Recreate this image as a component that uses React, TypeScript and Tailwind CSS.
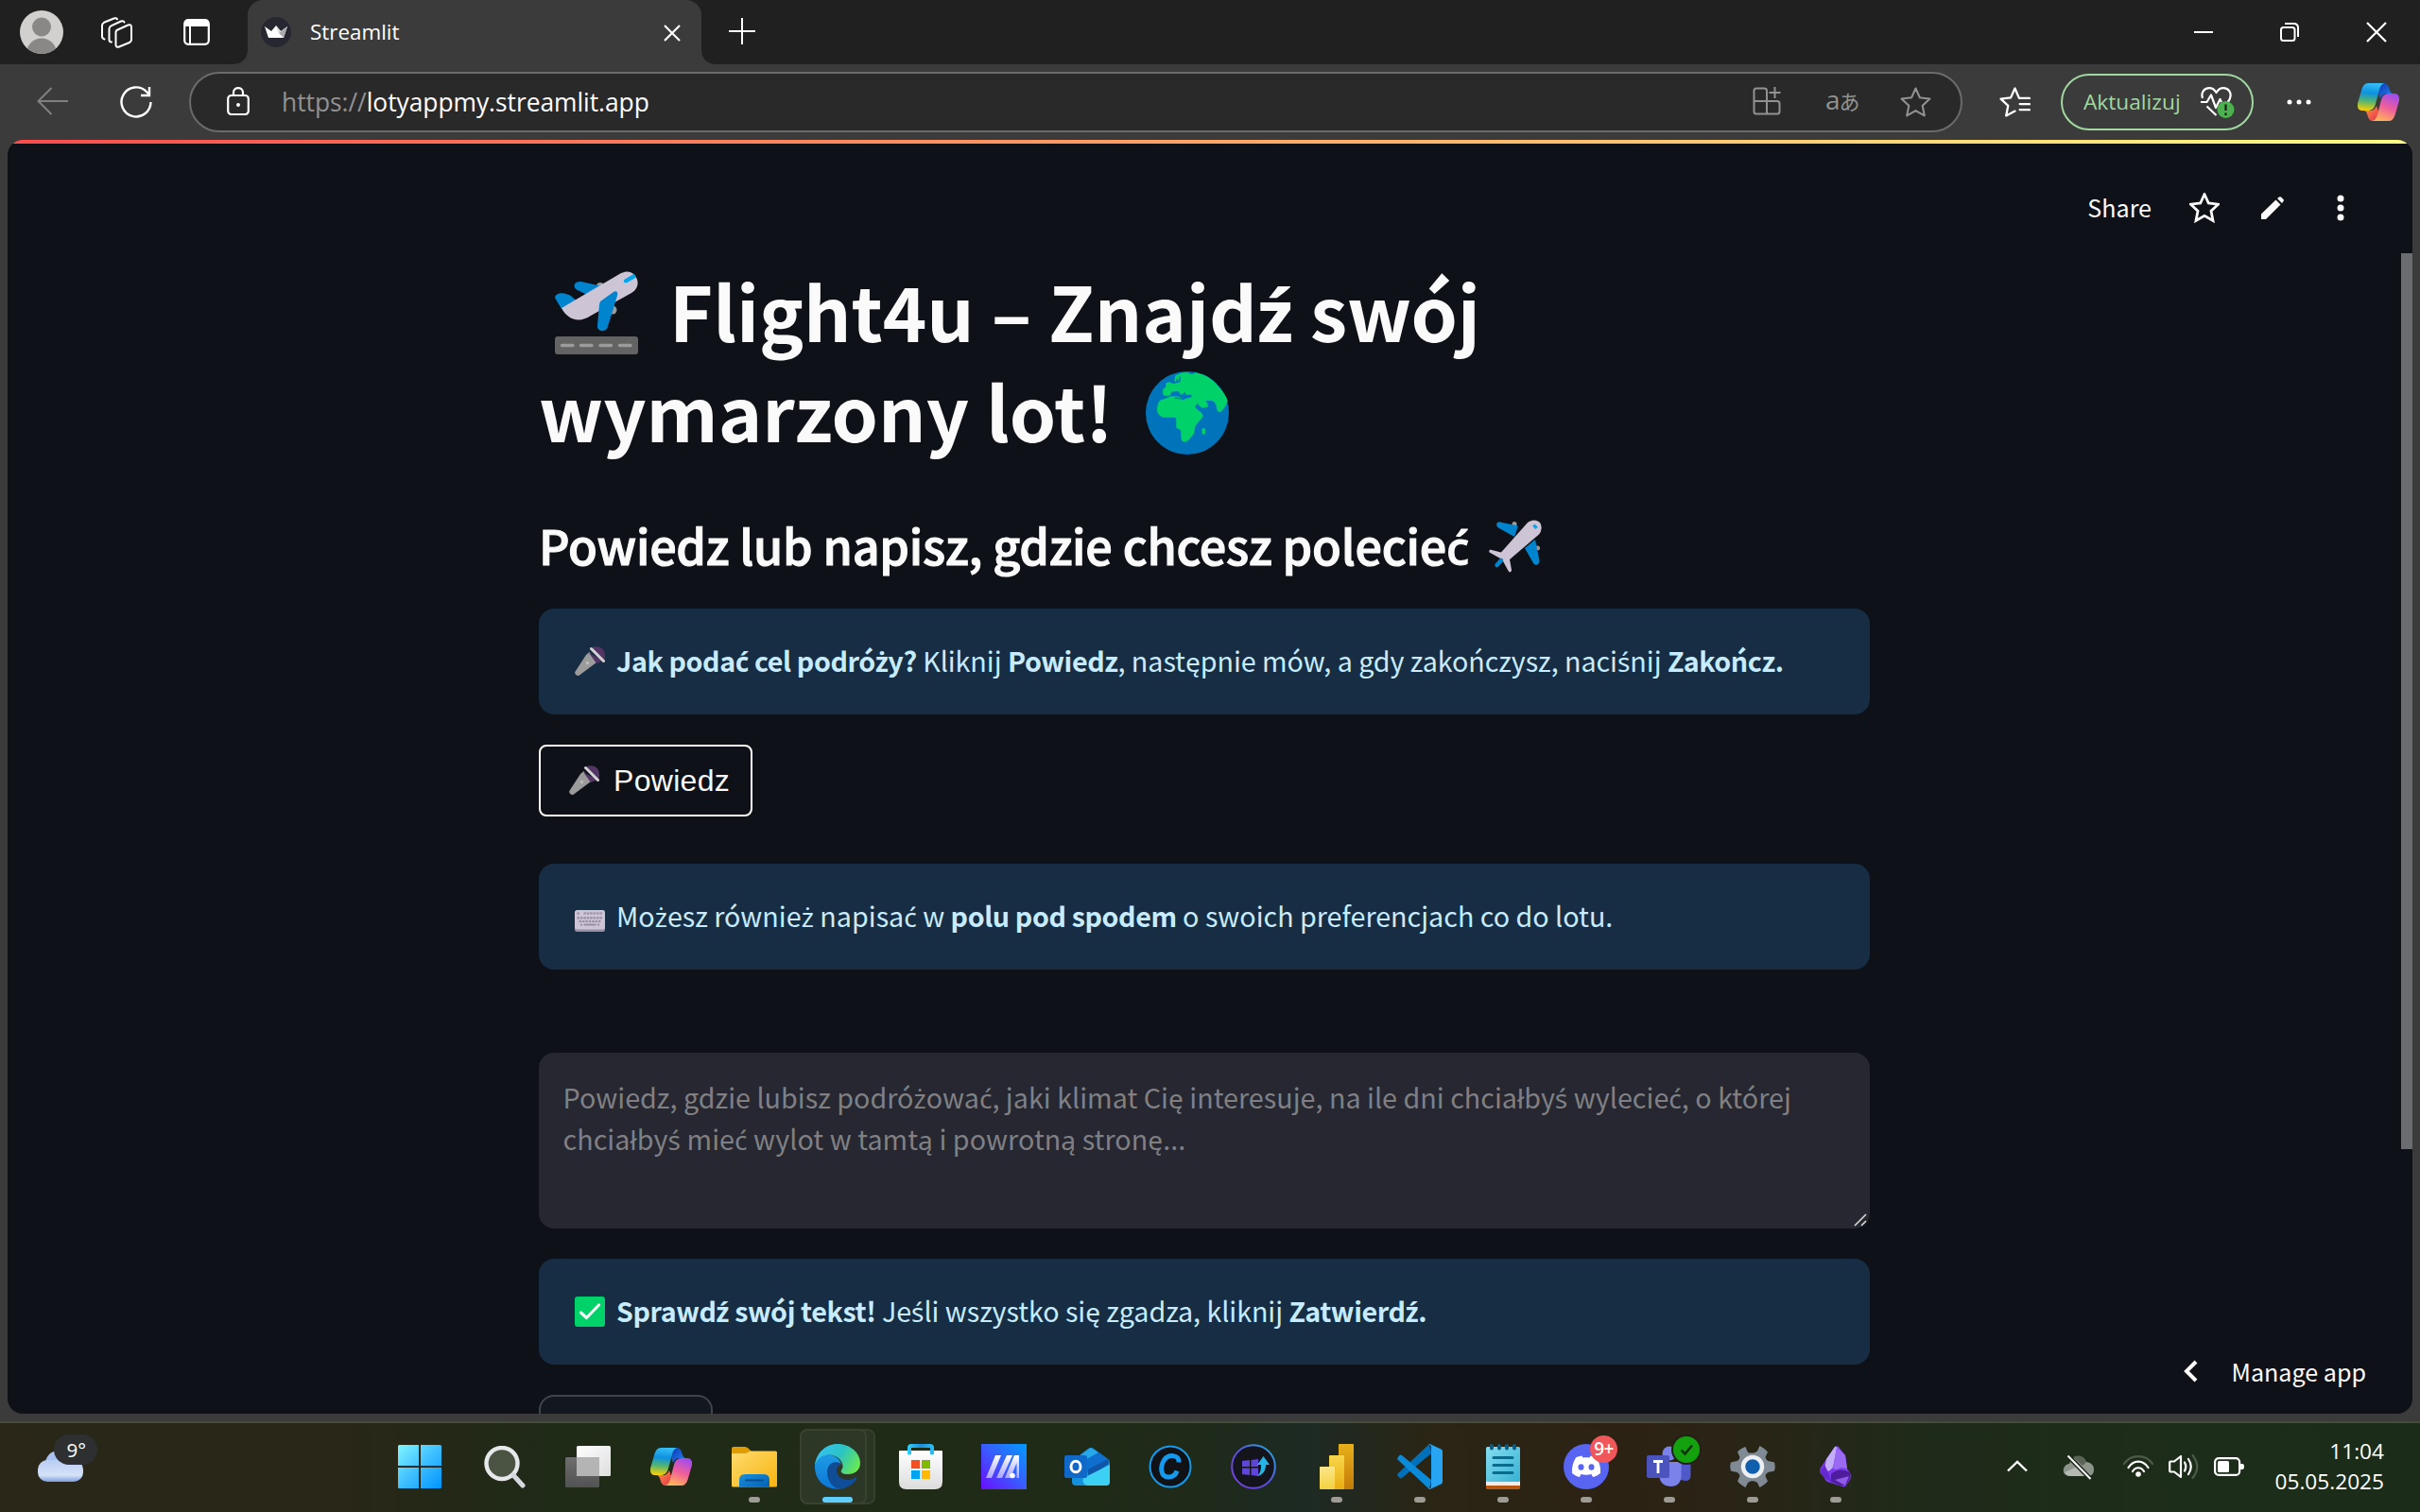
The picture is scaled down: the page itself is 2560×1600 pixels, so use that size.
import type { ReactNode } from "react";

/* Sets the Polish diacritics that the body face lacks in a matching humanist face. */
function Pl({ t }: { t: string }) {
  return (
    <>
      {t.split(/([ąęłśćźżĄĘŁŚĆŹŻ])/).map((part, i) =>
        i % 2 ? (
          <span key={i} className="font-['Noto_Sans'] text-[0.98em] leading-none">{part}</span>
        ) : (
          part
        ),
      )}
    </>
  );
}

/* ---------- emoji drawings ---------- */

const Takeoff = () => (
  <svg viewBox="0 0 88 88" className="ml-[17px] mr-[33px] inline-block size-[88px] align-[-13px]">
    <circle cx="48" cy="16" r="4" fill="#9B9B9B" />
    <circle cx="61" cy="41" r="4.5" fill="#9B9B9B" />
    <path d="M0 28C1 22 11 22 18 27L24 32L7 40Z" fill="#0084CE" />
    <path d="M28 11L50 16L36 26L24 20C18 17 20 10 28 11Z" fill="#0084CE" />
    <path d="M7 39L70 2C82 -4 90 8 87 16C86 19 84 21 81 23L38 47C26 55 14 52 7 39Z" fill="#CDC4D6" />
    <path d="M74 8.500L83.500 2.800L86 6.500L76.500 12C73.500 13.500 71.500 10 74 8.500Z" fill="#00A6ED" />
    <path d="M48 32L62 22C65 20 67 22 66 26L55.500 60C53 65 44 64 45 57L47 35Z" fill="#0084CE" />
    <rect x="0" y="69" width="88" height="19" rx="3" fill="#636363" />
    <path d="M7.500 78.500H19M27.500 78.500H39M48 78.500H59.500M68.500 78.500H80" stroke="#9B9B9B" strokeWidth="3.400" strokeLinecap="round" />
  </svg>
);

const Globe = () => (
  <svg viewBox="0 0 88 88" className="ml-[34px] inline-block size-[88px] align-[-13px]">
    <circle cx="44" cy="44" r="44" fill="#0074BA" />
    <path
      d="M19 24V19L22 17V13L25 12L29 14L36 12L38 7L34 9L31 10L32 5L39 2L44 2L49 4L53 2C62 4 70 9 75 15C81 21 84 26 86 31C85 35 81 41 79 42C76 43 76 40 75 35C73 30 70 30 64 30L63 32L65 35V37L60 38L57 36L57 34C53 33 51 35 52 39L58 44L60 47L52 57L50 66L45 72L42 74C38 74 38 71 38 68V62L33 59V49L30 48H19C14 47 12 42 13 38C13 33 16 30 20 30L27 27H33L36 28L41 30L48 28L50 26L48 24H43L42 20L38 24L34 20L27 21L25 25H20Z"
      fill="#00D26A"
      stroke="#00D26A"
      strokeWidth="1.500"
      strokeLinejoin="round"
    />
    <path d="M30.500 28.500C34 27.500 37 29 41 29.500M36 5.500V10C34 12 33 10 33 8" fill="none" stroke="#0074BA" strokeWidth="1.600" />
    <rect x="59.500" y="60" width="3.400" height="6.600" rx="1.700" fill="#00D26A" />
  </svg>
);

const Plane = () => (
  <svg viewBox="0 0 56 56" className="ml-[21px] inline-block size-[56px] align-[-8px]">
    <circle cx="27" cy="4.500" r="2.500" fill="#9B9B9B" />
    <circle cx="51.500" cy="30" r="2.500" fill="#9B9B9B" />
    <path d="M12 2.500L31 6.500L27 18L10 8.500C6.500 6 8.500 1.500 12 2.500Z" fill="#0084CE" />
    <path d="M38 30L49 21L53.500 43C54 47.500 49 49.500 47 46Z" fill="#0084CE" />
    <path d="M41 3C45 -.5 51 -.5 54 3C56.500 7 56 12 53 15.500L22 42L24 53C24 56 21.500 56 20.500 54L14 42L1.500 35C-1 33.500 .5 31 3 32L13 34.500Z" fill="#CDC4D6" />
    <path d="M8.500 48L13 43" stroke="#0084CE" strokeWidth="4.500" strokeLinecap="round" />
    <path d="M47.500 5.500L50.500 9" stroke="#00A6ED" strokeWidth="3.400" />
  </svg>
);

const Mic = ({ className }: { className: string }) => (
  <svg viewBox="0 0 32 32" className={"inline-block size-[32px] " + className}>
    <path d="M18 1.500C22 -.5 27 0 30 3.500C32.500 7 32.500 12 31 15.500Z" fill="#533566" />
    <path d="M15.500 6L23 17L5 30.500C3 32 -.5 30 .3 27L12 9Z" fill="#9B9B9B" />
    <path d="M15 7L23 18L30 15Z" fill="#533566" />
    <path d="M17.500 2.500L30.500 15.500" stroke="#D3D3D3" strokeWidth="3" strokeLinecap="round" />
    <circle cx="13.500" cy="17.500" r="1.700" fill="#BEBEBE" />
  </svg>
);

const KeyboardEmoji = () => (
  <svg viewBox="0 0 32 23" className="mr-[12px] inline-block h-[23px] w-[32px] align-[-5px]">
    <rect y="1" width="32" height="22" rx="2.500" fill="#998EA4" />
    <rect width="32" height="20.500" rx="2.500" fill="#CDC4D6" />
    <path d="M2.500 3.500h2.500M9.500 3.500h19.500" stroke="#998EA4" strokeWidth="2.200" strokeDasharray="2.500 .9" />
    <path d="M2.500 8.300h27" stroke="#998EA4" strokeWidth="2.200" strokeDasharray="2.500 .9" />
    <path d="M4.500 12h23" stroke="#998EA4" strokeWidth="2.200" strokeDasharray="2.500 .9" />
    <path d="M6 15.500h2M9.500 15.500h13M24 15.500h2" stroke="#998EA4" strokeWidth="2.200" />
  </svg>
);

const CheckEmoji = () => (
  <svg viewBox="0 0 32 32" className="mr-[12px] inline-block size-[32px] align-[-5px]">
    <rect width="32" height="32" rx="3" fill="#00D26A" />
    <path d="M6.500 17L12.500 22.500L25.500 9" fill="none" stroke="#F4F4F4" strokeWidth="3.200" strokeLinecap="round" strokeLinejoin="round" />
  </svg>
);

/* ---------- browser icons ---------- */

const STAR = "M16 1.500L20.300 11L30.500 12.200L23 19.200L25 29.500L16 24.400L7 29.500L9 19.200L1.500 12.200L11.700 11Z";

const Copilot = ({ className, id }: { className: string; id: string }) => (
  <svg viewBox="0 0 44 40" className={className}>
    <defs>
      <linearGradient id={id + "a"} x1=".4" y1="0" x2=".3" y2="1">
        <stop offset="0" stopColor="#35BDF5" /><stop offset=".35" stopColor="#0D91E1" /><stop offset=".65" stopColor="#52B471" /><stop offset="1" stopColor="#FFD000" />
      </linearGradient>
      <linearGradient id={id + "b"} x1=".7" y1="0" x2=".3" y2="1">
        <stop offset="0" stopColor="#A24BEE" /><stop offset=".5" stopColor="#F0609A" /><stop offset="1" stopColor="#FFB657" />
      </linearGradient>
      <linearGradient id={id + "c"} x1="0" y1="0" x2="1" y2="1">
        <stop offset="0" stopColor="#0A35B8" /><stop offset="1" stopColor="#2B8CF0" />
      </linearGradient>
      <linearGradient id={id + "d"} x1="0" y1="0" x2="1" y2="1">
        <stop offset="0" stopColor="#FF9B3D" /><stop offset="1" stopColor="#E5334F" />
      </linearGradient>
    </defs>
    <path d="M24 0H28C31 0 32.500 2 33.500 6C34.500 10 36 11 38 11H30C28 11 26 12 24 16L22 10Z" fill={"url(#" + id + "c)"} />
    <path d="M20 40H16C13 40 11.500 38 10.500 34C9.500 30 8 29 6 29H14C16 29 18 28 20 24L22 30Z" fill={"url(#" + id + "d)"} />
    <path d="M11 0H29C26 0 24 3 23 7L19 22C17.500 27 15 29 11 29H5C0 29 -1 24 .5 20L4.500 6C6 2 8 0 11 0Z" fill={"url(#" + id + "a)"} />
    <path d="M33 40H15C18 40 20 37 21 33L25 18C26.500 13 29 11 33 11H39C44 11 45 16 43.500 20L39.500 34C38 38 36 40 33 40Z" fill={"url(#" + id + "b)"} />
  </svg>
);

function TabStrip() {
  return (
    <div className="flex h-[68px] items-center bg-[#202020]">
      <svg viewBox="0 0 46 46" className="ml-[21px] size-[46px]">
        <defs><clipPath id="av"><circle cx="23" cy="23" r="23" /></clipPath></defs>
        <g clipPath="url(#av)">
          <rect width="46" height="46" fill="#D2D0CE" />
          <circle cx="23" cy="17.500" r="10" fill="#8A8886" />
          <ellipse cx="23" cy="46" rx="16" ry="16.500" fill="#8A8886" />
        </g>
      </svg>
      <svg viewBox="0 0 33 33" className="ml-[40px] size-[33px]" fill="none" stroke="#fff" strokeWidth="2" strokeLinejoin="round" strokeLinecap="round">
        <path d="M17.500 13.500L28.500 8.500C30.500 7.800 32 8.500 32 10.500V24C32 25.500 31.500 26.300 30 27L19 31.500C17 32.300 15.500 31.500 15.500 29.500V16.500C15.500 15 16 14 17.500 13.500Z" />
        <path d="M11 26.500C9 26.500 8.500 25.500 8.500 24V12.500C8.500 11 9 10 10.500 9.300L21 4.500C22.500 4 24 4.200 24.500 5.500" />
        <path d="M3.500 23.500C1.800 23 1 22 1 20.500V9C1 7.500 1.500 6.500 3 5.800L13.500 1.500C15 .9 16.500 1 17 2.300" />
      </svg>
      <svg viewBox="0 0 28 28" className="ml-[53.500px] size-[28px]">
        <rect x="1.200" y="1.200" width="25.600" height="25.600" rx="4" fill="none" stroke="#fff" strokeWidth="2.200" />
        <path d="M1 8V4C1 2 2.500 1 4 1H24C26 1 27 2.500 27 4V8Z" fill="#fff" />
        <path d="M7 7V27" stroke="#fff" strokeWidth="2" />
      </svg>
      <div className="relative ml-[40.500px] flex h-[68px] w-[480px] items-center rounded-t-[16px] bg-[#3b3b3b] pl-[14px] pr-[22px]">
        <svg viewBox="0 0 16 16" className="absolute -left-4 bottom-0 size-4"><path d="M16 0V16H0C10 16 16 10 16 0Z" fill="#3b3b3b" /></svg>
        <svg viewBox="0 0 16 16" className="absolute -right-4 bottom-0 size-4"><path d="M0 0V16H16C6 16 0 10 0 0Z" fill="#3b3b3b" /></svg>
        <svg viewBox="0 0 32 32" className="size-[32px]">
          <circle cx="16" cy="16" r="16" fill="#262730" />
          <path d="M4 10L11 15L16 9L21 15L28 10L24 22H8Z" fill="#fff" />
          <path d="M28 10L24 22L19 17Z" fill="#A9A9AE" />
          <path d="M16 9L21 15L19 18Z" fill="#D8D8DA" />
        </svg>
        <span className="ml-[20px] text-[22.400px] leading-8 text-white">Streamlit</span>
        <svg viewBox="0 0 18 18" className="ml-auto mt-[2px] size-[18px]"><path d="M1 1L17 17M17 1L1 17" stroke="#fff" strokeWidth="2.200" /></svg>
      </div>
      <svg viewBox="0 0 28 28" className="ml-[29px] mt-[-2px] size-[28px]"><path d="M14 0V28M0 14H28" stroke="#fff" strokeWidth="2" /></svg>
      <svg viewBox="0 0 20 20" className="ml-auto size-[20px]"><path d="M0 10H20" stroke="#fff" strokeWidth="2" /></svg>
      <svg viewBox="0 0 20 20" className="ml-[71px] size-[20px]" fill="none" stroke="#fff" strokeWidth="2">
        <rect x="1" y="5" width="14.500" height="14" rx="2.500" />
        <path d="M5 1H14.500C17.500 1 19 3 19 5.500V15" />
      </svg>
      <svg viewBox="0 0 22 22" className="ml-[71px] mr-[35px] size-[22px]"><path d="M1 1L21 21M21 1L1 21" stroke="#fff" strokeWidth="2.200" /></svg>
    </div>
  );
}

function Toolbar() {
  return (
    <div className="flex h-[80px] items-center bg-[#3b3b3b]">
      <svg viewBox="0 0 34 30" className="ml-[39px] mt-[-2px] h-[30px] w-[34px]" fill="none" stroke="#808080" strokeWidth="2"><path d="M33 15H2M15.500 1L1.500 15L15.500 29" /></svg>
      <svg viewBox="0 0 34 34" className="ml-[54px] size-[34px]" fill="none" stroke="#fff" strokeWidth="2.400">
        <path d="M32.500 17A15.500 15.500 0 1 1 28 6L31 9.500" />
        <path d="M31 1V10H22" />
      </svg>
      <div className="ml-[39px] flex h-[64px] w-[1876px] items-center rounded-full border-2 border-[#6b6b6b] bg-[#292929]">
        <svg viewBox="0 0 24 30" className="ml-[38px] mt-[-2px] h-[30px] w-[24px]" fill="none" stroke="#fff" strokeWidth="2.200">
          <rect x="1.200" y="9" width="21.600" height="20" rx="3.500" />
          <path d="M7 9V6C7 -.5 17 -.5 17 6V9" />
          <circle cx="12" cy="19" r="2" fill="#fff" stroke="none" />
        </svg>
        <span className="ml-[34px] text-[26.400px] leading-9 tracking-[-0.040px] text-white"><span className="text-[#929292]">https://</span>lotyappmy.streamlit.app</span>
        <svg viewBox="0 0 30 30" className="ml-auto mt-[-2px] size-[30px]" fill="none" stroke="#929292" strokeWidth="2">
          <path d="M15 15V4C15 2.500 14 1.500 12.500 1.500H4C2.500 1.500 1.500 2.500 1.500 4V26C1.500 27.500 2.500 28.500 4 28.500H26C27.500 28.500 28.500 27.500 28.500 26V17.500C28.500 16 27.500 15 26 15H1.500M15 15V28.500M23.500 0V12M17.500 6H29.500" />
        </svg>
        <span className="ml-[47px] mt-[-5px] flex w-[36px] items-baseline text-[#929292]">
          <span className="text-[28px] leading-8 tracking-[-1px]">a</span>
          <span className="font-['Noto_Sans_CJK_JP'] text-[22px] leading-8">あ</span>
        </span>
        <svg viewBox="0 0 32 32" className="ml-[43px] mr-[31px] size-[33px]" fill="none" stroke="#929292" strokeWidth="2" strokeLinejoin="round"><path d={STAR} /></svg>
      </div>
      <svg viewBox="0 0 32 32" className="ml-[39px] size-[33px]" fill="none" stroke="#fff" strokeWidth="2.200" strokeLinejoin="round" strokeLinecap="round">
        <path d="M31 11.500H20.300L16 1.500L11.700 11L1.500 12.200L9 19.200L7 29.500L16 24.800" />
        <path d="M21 17.500H31M21 23.500H31" />
      </svg>
      <div className="ml-[32px] flex h-[60px] w-[204px] items-center rounded-full border-2 border-[#a0d8a0] pl-[22px]">
        <span className="mt-[-1px] w-[103px] whitespace-nowrap text-[22.700px] leading-8 text-[#a0d8a0]">Aktualizuj</span>
        <svg viewBox="0 0 36 34" className="ml-[21px] mt-[1px] h-[34px] w-[36px]" fill="none" stroke="#fff" strokeWidth="2.200" strokeLinejoin="round">
          <path d="M2 12C0 6 3.500 1.200 9 1.200C12.500 1.200 15 3.500 16.500 6C18 3.500 20.500 1.200 24 1.200C29.500 1.200 33 6 31 12C30.500 14 29.500 15 28.500 16" />
          <path d="M0 16H6.500L11 8.500L16 22L20.500 13L22 16M6.500 20.500L16.500 30" />
          <circle cx="26.500" cy="24" r="9" fill="#4CAF50" stroke="none" />
          <path d="M26.500 18.500V25M26.500 27.500V30" stroke="#1c1c1c" />
        </svg>
      </div>
      <svg viewBox="0 0 26 6" className="ml-[35px] h-[6px] w-[26px]" fill="#fff"><circle cx="3" cy="3" r="2.500" /><circle cx="13" cy="3" r="2.500" /><circle cx="23" cy="3" r="2.500" /></svg>
      <Copilot id="cpa" className="ml-[49px] h-[40px] w-[44px]" />
    </div>
  );
}

/* ---------- Streamlit page ---------- */

const Info = ({ children, className }: { children: ReactNode; className: string }) => (
  <div className={"flex h-[112px] shrink-0 items-center rounded-[16px] bg-[#172d43] pb-[3px] pl-[38px] text-[28.700px] leading-[44px] text-[#c7ebff] " + className}>
    <p className="whitespace-nowrap">{children}</p>
  </div>
);

const B = ({ t }: { t: string }) => (
  <b className="tracking-[-0.400px]"><Pl t={t} /></b>
);

function Page() {
  return (
    <div className="mx-[8px] h-[1348px] overflow-hidden rounded-[16px] bg-[#0e1117]">
      <div className="h-[4px] bg-[linear-gradient(90deg,#ff4b4b,#fffd80)]" />
      <div className="relative flex h-[1344px] flex-col font-['Noto_Sans_CJK_SC','Noto_Sans',sans-serif] text-[#fafafa]">
        <div className="flex h-[123px] shrink-0 items-center justify-end pr-[72px] pt-[13px]">
          <span className="mt-[-3px] text-[25.100px] leading-8">Share</span>
          <svg viewBox="0 0 32 32" className="ml-[40px] size-[32px]" fill="none" stroke="#fafafa" strokeWidth="2.800" strokeLinejoin="miter"><path d={STAR} /></svg>
          <svg viewBox="0 0 26 24" className="ml-[44px] h-[24px] w-[26px]" fill="#fafafa">
            <path d="M0 24V18.500L15.500 3.500L20.500 8.500L5 24Z" /><path d="M17 2L19 .5C19.500 0 20.300 0 21 .5L23.500 3C24 3.500 24 4.300 23.500 5L22 7Z" />
          </svg>
          <svg viewBox="0 0 8 28" className="ml-[54px] h-[28px] w-[8px]" fill="#fafafa"><circle cx="4" cy="4" r="3.500" /><circle cx="4" cy="14" r="3.500" /><circle cx="4" cy="24" r="3.500" /></svg>
        </div>

        <main className="ml-[562px] flex w-[1408px] flex-col">
          <h1 className="h-[212px] whitespace-nowrap text-[79px] font-bold leading-[106px]">
            <Takeoff /><span className="tracking-[-0.050px]"><Pl t="Flight4u – Znajdź swój" /></span>
            <br />
            <Pl t="wymarzony lot!" /><Globe />
          </h1>
          <h2 className="mt-[55px] h-[68px] whitespace-nowrap text-[50.300px] font-medium leading-[68px]">
            <span className="tracking-[-0.240px] [-webkit-text-stroke:1.100px_#fafafa]"><Pl t="Powiedz lub napisz, gdzie chcesz polecieć" /></span><Plane />
          </h2>

          <Info className="mt-[34px]">
            <Mic className="mr-[12px] align-[-5px]" />
            <B t="Jak podać cel podróży?" />
            <span className="tracking-[-0.050px]"> Kliknij <B t="Powiedz" />, <Pl t="następnie mów, a gdy zakończysz, naciśnij " /></span>
            <B t="Zakończ." />
          </Info>

          <button className="mt-[32px] flex h-[76px] w-[226px] items-center rounded-[8px] border-2 border-white pl-[30px] font-['Liberation_Sans'] text-[32px] tracking-[0.300px] text-[#fafafa]">
            <Mic className="mr-[15px]" />
            Powiedz
          </button>

          <Info className="mt-[50px]">
            <KeyboardEmoji />
            <Pl t="Możesz również napisać w " /><B t="polu pod spodem" /><Pl t=" o swoich preferencjach co do lotu." />
          </Info>

          <div className="relative mt-[88px] h-[186px] rounded-[16px] bg-[#262730] pl-[25.500px] pt-[25px] text-[28.700px] leading-[44px] text-[#808084]">
            <p className="whitespace-nowrap tracking-[0.020px]">
              <Pl t="Powiedz, gdzie lubisz podróżować, jaki klimat Cię interesuje, na ile dni chciałbyś wylecieć, o której" />
              <br />
              <span className="tracking-[0.060px]"><Pl t="chciałbyś mieć wylot w tamtą i powrotną stronę..." /></span>
            </p>
            <svg viewBox="0 0 14 14" className="absolute bottom-[2px] right-[3px] size-[14px]" stroke="#d8d8d8" strokeWidth="1.600"><path d="M1 13L13 1M8 13L13 8" /></svg>
          </div>

          <Info className="mt-[32px]">
            <CheckEmoji />
            <B t="Sprawdź swój tekst!" /> <span className="tracking-[-0.050px]"><Pl t="Jeśli wszystko się zgadza, kliknij " /></span><B t="Zatwierdź." />
          </Info>

          <div className="mt-[32px] h-[76px] w-[184px] rounded-[16px] border-2 border-[#41444c] bg-[#131720]" />
        </main>

        <div className="absolute right-0 top-[116px] h-[948px] w-[12px] bg-[#6b6c6f]" />
        <div className="absolute bottom-[23px] right-[49px] flex items-center">
          <svg viewBox="0 0 16 24" className="mr-[36px] h-[24px] w-[16px]" fill="none" stroke="#fff" strokeWidth="4"><path d="M14 2L4 12L14 22" /></svg>
          <span className="text-[25.100px] leading-[44px]">Manage app</span>
        </div>
      </div>
    </div>
  );
}

/* ---------- taskbar ---------- */

const Slot = ({ children, dot }: { children: ReactNode; dot?: boolean }) => (
  <div className="relative flex h-[94px] w-[88px] items-center justify-center pb-[2px]">
    {children}
    {dot && <div className="absolute bottom-[10px] h-[6px] w-[12px] rounded-full bg-[#9d9b93]" />}
  </div>
);

const ic = "size-[48px] overflow-visible";

function Taskbar() {
  return (
    <div className="flex h-[96px] items-stretch border-t-2 border-[#454a3d] bg-[linear-gradient(90deg,#2a2718_0%,#292717_14%,#1f2a17_23%,#1f2a18_49%,#1d2a24_54%,#2a2515_59%,#2c2214_67%,#282516_73%,#1f2a19_79%,#1c2d19_90%,#1b2d18_100%)]">
      <div className="w-[402px] pl-[40px] pt-[12px]">
        <svg viewBox="0 0 66 50" className="h-[50px] w-[66px] overflow-visible">
          <defs>
            <linearGradient id="cl" x1="0" y1="0" x2="0" y2="1"><stop offset="0" stopColor="#B9CDF2" /><stop offset=".7" stopColor="#D5E2F8" /><stop offset="1" stopColor="#7F9FE0" /></linearGradient>
          </defs>
          <circle cx="22" cy="31" r="14" fill="#A9C1F0" />
          <rect x="0" y="27" width="48" height="23" rx="10" fill="url(#cl)" />
          <rect x="17" y="0" width="46" height="32" rx="16" fill="#2e2f31" />
          <text x="30.500" y="23.500" fontSize="20.500" fill="#fff" fontFamily="Open Sans">9°</text>
        </svg>
      </div>

      <Slot>
        <svg viewBox="0 0 46 46" className="mr-[4px] size-[46px]">
          <defs><linearGradient id="wn" gradientUnits="userSpaceOnUse" x1="0" y1="0" x2="46" y2="46"><stop offset="0" stopColor="#80F5FF" /><stop offset=".5" stopColor="#40C0FF" /><stop offset="1" stopColor="#0094FF" /></linearGradient></defs>
          <path d="M1.500 0H22V22H0V1.500Q0 0 1.500 0ZM24 0H44.500Q46 0 46 1.500V22H24ZM0 24H22V46H1.500Q0 46 0 44.500ZM24 24H46V44.500Q46 46 44.500 46H24Z" fill="url(#wn)" />
        </svg>
      </Slot>
      <Slot>
        <svg viewBox="0 0 44 45" className="h-[45px] w-[44px]">
          <circle cx="19" cy="18.500" r="16.500" fill="#4b5443" stroke="#E6E8EA" strokeWidth="4.400" />
          <path d="M31 31L41 42" stroke="#D5D9DD" strokeWidth="5" strokeLinecap="round" />
        </svg>
      </Slot>
      <Slot>
        <svg viewBox="0 0 48 44" className="h-[44px] w-[48px]">
          <defs>
            <linearGradient id="tv" x1="0" y1="0" x2="1" y2="1"><stop offset="0" stopColor="#fff" /><stop offset="1" stopColor="#DEDEDE" /></linearGradient>
            <linearGradient id="tw" x1="0" y1="0" x2="0" y2="1"><stop offset="0" stopColor="#6e6e6e" /><stop offset="1" stopColor="#525252" /></linearGradient>
          </defs>
          <rect x="0" y="12" width="36" height="32" rx="1.500" fill="url(#tw)" />
          <rect x="12" y="0" width="36" height="32" rx="1.500" fill="url(#tv)" />
          <rect x="12" y="12" width="24" height="20" fill="#B4B4B4" />
        </svg>
      </Slot>
      <Slot><Copilot id="cpb" className="h-[40px] w-[44px]" /></Slot>
      <Slot dot>
        <svg viewBox="0 0 48 44" className="h-[44px] w-[48px]">
          <defs>
            <linearGradient id="fo" x1="0" y1="0" x2="1" y2="1"><stop offset="0" stopColor="#FFDB6E" /><stop offset="1" stopColor="#F7B40E" /></linearGradient>
            <linearGradient id="fb" x1="0" y1="0" x2="1" y2="1"><stop offset="0" stopColor="#1A90DC" /><stop offset="1" stopColor="#0560B2" /></linearGradient>
          </defs>
          <path d="M0 3Q0 1 2 1H14Q16 1 18 3L21 6V12H0Z" fill="#DE9C05" />
          <path d="M0 8H15L20 5.500H46.500Q48 5.500 48 7V42Q48 43.500 46.500 43.500H1.500Q0 43.500 0 42Z" fill="url(#fo)" />
          <path d="M8 43.500V36Q8 30 14 30H34Q40 30 40 36V43.500Z" fill="url(#fb)" />
          <path d="M15 36.500H33" stroke="#064F91" strokeWidth="2" strokeLinecap="round" />
        </svg>
      </Slot>
      <Slot>
        <div className="absolute left-[44px] top-[6px] h-[80px] w-[40px] rounded-[8px] border-2 border-[#353f2e] bg-[#2a3423]" />
        <div className="absolute left-[4px] top-[6px] h-[80px] w-[71px] rounded-[8px] border-2 border-[#39422f] bg-[#2d3726]" />
        <svg viewBox="0 0 48 48" className="relative size-[48px]">
          <defs>
            <linearGradient id="e1" x1="0" y1=".3" x2="1" y2=".7"><stop offset="0" stopColor="#35C1F1" /><stop offset=".5" stopColor="#2BC3C4" /><stop offset="1" stopColor="#6BEA4C" /></linearGradient>
            <linearGradient id="e2" x1=".3" y1="0" x2=".3" y2="1"><stop offset="0" stopColor="#1E9BE3" /><stop offset="1" stopColor="#0B76D8" /></linearGradient>
            <linearGradient id="e3" x1="0" y1="0" x2="1" y2=".6"><stop offset="0" stopColor="#0F4C92" /><stop offset="1" stopColor="#104E9C" /></linearGradient>
          </defs>
          <path d="M0 24C0 14 8 11.500 14 11.500C22 11.500 27 17 28 22C24 17 18 20 17 27C16 37 24 43 32 46.500C16 51 0 42 0 24Z" fill="url(#e2)" />
          <path d="M0 23C1 10 11 0 24 0C38 0 48 10 48 20C48 28 42 32 35 32C29 32 27 30 28 27.500C31 25 29.500 19 25 15C17 8.500 3 11 0 23Z" fill="url(#e1)" />
          <path d="M28 22C22 16 13 20 13 30C13 40 20 48 28 47.600C36 46 42 41 44 37C45 35 43 35 42 36C33 41 24 36 23 29C22.500 25 25 22 28 22Z" fill="url(#e3)" />
        </svg>
        <div className="absolute bottom-[10px] left-[28px] h-[6px] w-[32px] rounded-full bg-[#60cdff]" />
      </Slot>
      <Slot>
        <svg viewBox="0 0 46 48" className="h-[48px] w-[46px]">
          <defs>
            <linearGradient id="st" x1="0" y1="0" x2="0" y2="1"><stop offset="0" stopColor="#fff" /><stop offset="1" stopColor="#DCDCDC" /></linearGradient>
            <linearGradient id="sh" gradientUnits="userSpaceOnUse" x1="9" y1="0" x2="37" y2="0"><stop offset="0" stopColor="#2FD3FA" /><stop offset=".5" stopColor="#1B8FE0" /><stop offset="1" stopColor="#2BC2F5" /></linearGradient>
          </defs>
          <path d="M1 7H45Q46 7 46 8V40Q46 48 38 48H8Q0 48 0 40V8Q0 7 1 7Z" fill="url(#st)" />
          <path d="M11 11V4Q11 2 13 2H33Q35 2 35 4V11" fill="none" stroke="url(#sh)" strokeWidth="4" />
          <path d="M13 17H22V26H13Z" fill="#F25022" /><path d="M24 17H33V26H24Z" fill="#7FBA00" />
          <path d="M13 28H22V37H13Z" fill="#00A4EF" /><path d="M24 28H33V37H24Z" fill="#FFB900" />
        </svg>
      </Slot>
      <Slot>
        <svg viewBox="0 0 48 48" className={ic}>
          <defs>
            <linearGradient id="as" x1="1" y1="0" x2="0" y2="1"><stop offset="0" stopColor="#009BFF" /><stop offset=".5" stopColor="#3a5cff" /><stop offset="1" stopColor="#6A0DFF" /></linearGradient>
            <linearGradient id="at" x1="0" y1="0" x2="0" y2="1"><stop offset="0" stopColor="#fff" /><stop offset="1" stopColor="#A9A4FF" /></linearGradient>
          </defs>
          <rect width="48" height="48" fill="url(#as)" />
          <path d="M15 12H21L11 36H5ZM27 12H33L22 36H16Z" fill="url(#at)" />
          <path d="M35 12H40V36H37.500V20L31 36H25Z" fill="url(#at)" />
          <circle cx="33" cy="33.500" r="2.800" fill="#fff" />
        </svg>
      </Slot>
      <Slot>
        <svg viewBox="0 0 48 40" className="h-[40px] w-[48px]">
          <path d="M8 14L25 1Q28 -1 31 1L46 12Q48 13 48 16V36Q48 40 44 40H12Q8 40 8 36Z" fill="#1490DF" />
          <path d="M10 14L28 0L38 7L22 20Z" fill="#28A8EA" />
          <path d="M20 14L36 5L46 12Q48 14 46 16L26 30Z" fill="#0F6FCE" />
          <path d="M25 23L46 12L47 17L25 32Z" fill="#1056A8" />
          <path d="M48 18V36Q48 40 44 40H24Q18 38 20 32Z" fill="#3DD0F5" />
          <rect x="0" y="8" width="24" height="24" rx="2" fill="#1068C8" />
          <ellipse cx="12" cy="20" rx="5" ry="5.800" fill="none" stroke="#fff" strokeWidth="3" />
        </svg>
      </Slot>
      <Slot>
        <svg viewBox="0 0 48 48" className={ic}>
          <circle cx="24" cy="24" r="21.500" fill="#101216" stroke="#149BF0" strokeWidth="2" />
          <path d="M33 19.500C34 11 22 10.500 17.500 17C13 24 13.500 35 22 35C27 35 30 32 31 28.500" fill="none" stroke="#149BF0" strokeWidth="5" />
        </svg>
      </Slot>
      <Slot>
        <svg viewBox="0 0 48 48" className={ic}>
          <defs><linearGradient id="nx" x1="0" y1="1" x2="1" y2="0"><stop offset="0" stopColor="#7A3BE8" /><stop offset=".5" stopColor="#5B52D8" /><stop offset="1" stopColor="#1CB4E8" /></linearGradient></defs>
          <circle cx="24" cy="24" r="22.800" fill="#14151c" stroke="url(#nx)" strokeWidth="2" />
          <path d="M12 18L20 17V24H12ZM21.500 17L29 16V24H21.500ZM12 25.500H20V33L12 32ZM21.500 25.500H29V34L21.500 33Z" fill="#5F45D8" />
          <path d="M28 34C32 30 32 26 32 22H28L34.500 13L41 22H37C37 28 34 33 28 34Z" fill="#25B4E4" />
        </svg>
      </Slot>
      <Slot dot>
        <svg viewBox="0 0 48 48" className={ic}>
          <defs>
            <linearGradient id="p1" x1="0" y1="0" x2="0" y2="1"><stop offset="0" stopColor="#E8B01A" /><stop offset="1" stopColor="#C17B07" /></linearGradient>
            <linearGradient id="p2" x1="0" y1="0" x2="0" y2="1"><stop offset="0" stopColor="#F7D64B" /><stop offset="1" stopColor="#E9AE12" /></linearGradient>
            <linearGradient id="p3" x1="0" y1="0" x2="0" y2="1"><stop offset="0" stopColor="#FAE68A" /><stop offset="1" stopColor="#F3D13F" /></linearGradient>
          </defs>
          <rect x="26" y="0" width="16" height="48" rx="1" fill="url(#p1)" />
          <rect x="16" y="12" width="16" height="36" rx="1" fill="url(#p2)" />
          <rect x="6" y="24" width="16" height="24" rx="1" fill="url(#p3)" />
        </svg>
      </Slot>
      <Slot dot>
        <svg viewBox="0 0 48 48" className={ic}>
          <path d="M34 0L36 10L5 36Q3.500 37 2 35.500L.5 33.500Q-.5 32 1 31L33 1Z" fill="#0070B8" />
          <path d="M34 48L36 38L5 12Q3.500 11 2 12.500L.5 14.500Q-.5 16 1 17L33 47Z" fill="#0A8AD8" />
          <path d="M34.500 0L46.500 5.500Q48 6.200 48 8V40Q48 41.800 46.500 42.500L34.500 48L33 47.500Q36 47.500 36 44V4Q36 .5 33 .5Z" fill="#27A5F2" />
        </svg>
      </Slot>
      <Slot dot>
        <svg viewBox="0 0 48 48" className={ic}>
          <defs><linearGradient id="np" x1="0" y1="0" x2="1" y2="1"><stop offset="0" stopColor="#86DDF0" /><stop offset="1" stopColor="#36B2D4" /></linearGradient></defs>
          <rect x="6" y="42" width="36" height="6" rx="1.500" fill="#B9560F" />
          <rect x="6" y="38" width="36" height="6" fill="#EDEDED" />
          <rect x="6" y="3" width="36" height="37" rx="1.500" fill="url(#np)" />
          <path d="M14 14.500H34M14 22.500H34M14 30.500H34" stroke="#0A6A90" strokeWidth="3" strokeLinecap="round" />
          <path d="M12 2V4.500M20 2V4.500M28 2V4.500M36 2V4.500" stroke="#0A5C80" strokeWidth="4" strokeLinecap="round" />
        </svg>
      </Slot>
      <Slot dot>
        <svg viewBox="0 0 48 48" className={ic}>
          <circle cx="24" cy="24" r="24" fill="#5865F2" />
          <path d="M19.500 12.500C16 13 13.500 14 13 14.500C10 19 8.500 25 9 31C12 33.500 14.500 34.500 17 35L18.500 32C22 33 26 33 29.500 32L31 35C33.500 34.500 36 33.500 39 31C39.500 25 38 19 35 14.500C34.500 14 32 13 28.500 12.500L27.500 14.500C25 14 23 14 20.500 14.500Z" fill="#fff" />
          <ellipse cx="18.500" cy="24.500" rx="3" ry="3.300" fill="#5865F2" /><ellipse cx="29.500" cy="24.500" rx="3" ry="3.300" fill="#5865F2" />
        </svg>
        <div className="absolute left-[48px] top-[13px] flex size-[29px] items-center justify-center rounded-full bg-[#f0575a] pb-[1px] text-[19px] font-semibold leading-none tracking-[-0.500px] text-white">9+</div>
      </Slot>
      <Slot dot>
        <svg viewBox="0 0 48 48" className={ic}>
          <circle cx="24" cy="10" r="7.500" fill="#7B83EB" />
          <path d="M34 20H44.500Q46.500 20 46.500 22V33Q46.500 39 41 39Q36 39 34 36Z" fill="#5059C9" />
          <path d="M13 19H34.500Q36.500 19 36.500 21V33Q36.500 45 25 45Q15 45 13 34Z" fill="#7B83EB" />
          <rect x="0" y="12" width="24" height="24" rx="2" fill="#4B53BC" />
          <path d="M7 18.500H17M12 18.500V31" stroke="#fff" strokeWidth="2.800" />
        </svg>
        <svg viewBox="0 0 32 32" className="absolute left-[46px] top-[12px] size-[32px]">
          <circle cx="16" cy="16" r="15" fill="#13A10E" stroke="#242018" strokeWidth="2" />
          <path d="M10.500 16.500L14.500 20.500L22 11.500" fill="none" stroke="#14330f" strokeWidth="2.600" />
        </svg>
      </Slot>
      <Slot dot>
        <svg viewBox="0 0 48 48" className={ic}>
          <path d="M19 9L16.500 3C13 4 10 6 8 8.500L10.500 14C10 17 7.500 18.500 5 18.500L1 19.500C0 22.500 0 25.500 1 28.500L5 29.500C8 29.500 10 31 10.500 34L8 39.500C10 42 13 44 16.500 46L19 41C22 38.500 26 38.500 29 41L31.500 46C35 44 38 42 40 39.500L37.500 34C38 31 40 29.500 43 29.500L47 28.500C48 25.500 48 22.500 47 19.500L43 18.500C40.500 18.500 38 17 37.500 14L40 8.500C38 6 35 4 31.500 2L29 7.500C26 10 22 10 19 9Z" fill="#7F8A94" />
          <circle cx="24" cy="24" r="10" fill="#0F5FAE" stroke="#EDEFF1" strokeWidth="4.500" />
        </svg>
      </Slot>
      <Slot dot>
        <svg viewBox="0 0 34 44" className="h-[44px] w-[34px]">
          <path d="M7 14L16 1Q18 -.5 20 1L27 10L29 24L33 30Q34 33 32 36L28 42Q27 44 24 43L8 38Q6 37 5 34L0 28Q0 25 1 23L5 17Z" fill="#7C3AED" />
          <path d="M7 14L16 1Q18 0 18 2L15 18Q14 26 8 27L5 24Z" fill="#C4AEF8" />
          <path d="M18 1L27 10L29 24Q22 22 18 25L14 24Z" fill="#9A6BF2" />
          <path d="M5 20L9 28L12 38L5 34L0 28Z" fill="#6429CF" />
          <path d="M12 30Q20 22 32 28L33 32L28 42L22 42L12 38Z" fill="#4E1D9E" />
          <path d="M16 36L31 32L27 42Z" fill="#8F5CE8" />
        </svg>
      </Slot>

      <div className="ml-auto flex items-center pb-[2px] pr-[38px]">
        <svg viewBox="0 0 22 12" className="mt-[-2px] h-[12px] w-[22px]" fill="none" stroke="#fff" strokeWidth="2.300"><path d="M1 11.500L11 1.800L21 11.500" /></svg>
        <svg viewBox="0 0 34 27" className="ml-[37px] h-[27px] w-[34px]">
          <path d="M8 23C2 23 0 19 1 15C2 12 4 10.500 7 10C10 1 22 0 25 8C31 9 33 12 33 16C33 21 30 23 27 23Z" fill="#8d958b" />
          <path d="M11 3C17 0 23 2 25 8L21 12Z" fill="#5a6355" />
          <path d="M2 19L18 12L30 22L27 23H8C5 23 3 21 2 19Z" fill="#b4bab2" />
          <path d="M5.500 1.500L29.500 26" stroke="#1c2a19" strokeWidth="5" /><path d="M5.500 1.500L29.500 26" stroke="#fff" strokeWidth="2" />
        </svg>
        <svg viewBox="0 0 32 23" className="ml-[30px] mt-[-2px] h-[23px] w-[32px]" fill="none" strokeWidth="2.200" strokeLinecap="round">
          <path d="M1 9C8 -1.500 24 -1.500 31 9" stroke="#4d5a49" />
          <path d="M5.500 13C11 4.500 21 4.500 26.500 13" stroke="#fff" /><path d="M10 17C13 12 19 12 22 17" stroke="#fff" />
          <circle cx="16" cy="20" r="2.800" fill="#fff" />
        </svg>
        <svg viewBox="0 0 32 28" className="ml-[16px] h-[28px] w-[32px]" fill="none" stroke="#fff" strokeWidth="2.200" strokeLinejoin="round" strokeLinecap="round">
          <path d="M1.200 9.500Q1.200 8.500 2.200 8.500H6L13 3V25L6 19.500H2.200Q1.200 19.500 1.200 18.500Z" />
          <path d="M17 9.500Q19.500 14 17 18.500M21 6Q26.500 14 21 22" /><path d="M25.500 2Q35 14 25.500 26" stroke="#4d5a49" />
        </svg>
        <svg viewBox="0 0 32 20" className="ml-[16px] h-[20px] w-[32px]">
          <rect x="1.100" y="1.100" width="26" height="17.800" rx="4" fill="none" stroke="#fff" strokeWidth="2.200" />
          <rect x="4" y="4" width="12" height="12" rx="1.500" fill="#fff" /><path d="M28 7H30Q32 7 32 10T30 13H28Z" fill="#fff" />
        </svg>
        <div className="ml-[33px] flex flex-col items-end text-[22.650px] leading-[32px] text-white">
          <span>11:04</span>
          <span>05.05.2025</span>
        </div>
      </div>
    </div>
  );
}

export default function App() {
  return (
    <div className="h-[1600px] w-[2560px] overflow-hidden bg-[#3b3b3b] font-['Open_Sans',sans-serif]">
      <TabStrip />
      <Toolbar />
      <Page />
      <div className="h-[8px] bg-[#3b3b3b]" />
      <Taskbar />
    </div>
  );
}
